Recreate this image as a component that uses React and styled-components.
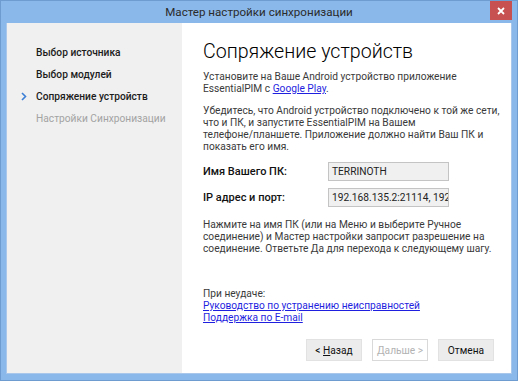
import React from "react";
import styled, { createGlobalStyle } from "styled-components";

const GlobalStyle = createGlobalStyle`
  html, body {
    margin: 0;
    padding: 0;
    background: #8ab8ea;
  }
  * {
    box-sizing: border-box;
  }
`;

const FONT = `Roboto, "Noto Sans", "DejaVu Sans", sans-serif`;

const Window = styled.div`
  position: relative;
  width: 518px;
  height: 381px;
  border: 1px solid #6e9bd0;
  background: #8ab8ea;
  display: flex;
  flex-direction: column;
  font-family: ${FONT};
`;

const TitleBar = styled.div`
  height: 22px;
  display: flex;
  align-items: center;
  justify-content: center;
  font-size: 11.6px;
  color: #2b2b2b;
`;

const CloseButton = styled.div`
  position: absolute;
  top: 0;
  right: 5px;
  width: 22px;
  height: 19px;
  background: #c75050;
  display: flex;
  align-items: center;
  justify-content: center;
`;

const Panel = styled.div`
  flex: 1;
  min-height: 0;
  margin: 0 5px 6px 5px;
  display: grid;
  grid-template-columns: 175px minmax(0, 1fr);
  background: #ffffff;
  border: 1px solid #a9c7ea;
  border-top: none;
`;

const Sidebar = styled.div`
  background: #f0f0f0;
  padding: 18px 0 0 0;
  display: flex;
  flex-direction: column;
`;

const Step = styled.div`
  position: relative;
  height: 22px;
  display: flex;
  align-items: center;
  padding-left: 29px;
  font-size: 10.2px;
  white-space: nowrap;
  font-weight: ${(p) => (p.$disabled ? 400 : 500)};
  color: ${(p) => (p.$disabled ? "#a3a3a3" : "#1c1c1c")};
`;

const Chevron = styled.svg`
  position: absolute;
  left: 14px;
  top: 7px;
`;

const Content = styled.div`
  min-width: 0;
  padding: 14px 17px 12px 21px;
  display: flex;
  flex-direction: column;
  color: #3a3a3a;
  font-size: 10.2px;
  line-height: 12px;
`;

const Heading = styled.h1`
  margin: 0 0 4px 0;
  font-size: 19.6px;
  line-height: 30px;
  font-weight: 300;
  color: #000;
`;

const Para = styled.p`
  margin: 0 0 ${(p) => p.$gap || 0}px 0;
  white-space: nowrap;
`;

const Link = styled.a`
  color: #1f1fe0;
  text-decoration: underline;
  cursor: pointer;
`;

const FieldRow = styled.div`
  display: flex;
  align-items: center;
  margin-bottom: ${(p) => p.$gap || 0}px;
`;

const Label = styled.div`
  width: 125px;
  color: #111;
  font-size: 11px;
  font-weight: 500;
`;

const Field = styled.div`
  width: 121px;
  height: 19px;
  border: 1px solid #c4c4c4;
  background: #f0f0f0;
  padding: 0 3px;
  display: flex;
  align-items: center;
  white-space: nowrap;
  overflow: hidden;
  color: #222;
`;

const Help = styled.div`
  margin-top: 33px;
  display: flex;
  flex-direction: column;
  align-items: flex-start;
`;

const Spacer = styled.div`
  flex: 1;
`;

const Footer = styled.div`
  display: flex;
  justify-content: flex-end;
  gap: 10px;
`;

const Button = styled.button`
  width: 56px;
  height: 22px;
  font-family: ${FONT};
  font-size: 10.2px;
  padding: 0;
  border: 1px solid ${(p) => (p.disabled ? "#d9d9d9" : "#e2e2e2")};
  background: ${(p) => (p.disabled ? "#ffffff" : "#ececec")};
  color: ${(p) => (p.disabled ? "#b2b2b2" : "#111")};
  u {
    text-decoration: underline;
  }
`;

const steps = [
  { label: "Выбор источника" },
  { label: "Выбор модулей" },
  { label: "Сопряжение устройств", current: true },
  { label: "Настройки Синхронизации", disabled: true },
];

export default function App() {
  return (
    <>
      <GlobalStyle />
      <Window>
        <TitleBar>Мастер настройки синхронизации</TitleBar>
        <CloseButton>
          <svg width="8" height="8" viewBox="0 0 8 8">
            <path d="M1 1 L7 7 M7 1 L1 7" stroke="#fff" strokeWidth="1.8" />
          </svg>
        </CloseButton>
        <Panel>
          <Sidebar>
            {steps.map((s) => (
              <Step key={s.label} $disabled={s.disabled}>
                {s.current && (
                  <Chevron width="6" height="9" viewBox="0 0 6 9">
                    <polyline points="1,1 4.5,4.5 1,8" fill="none" stroke="#3b7fd6" strokeWidth="1.6" />
                  </Chevron>
                )}
                {s.label}
              </Step>
            ))}
          </Sidebar>
          <Content>
            <Heading>Сопряжение устройств</Heading>
            <Para $gap={10}>
              Установите на Ваше Android устройство приложение
              <br />
              EssentialPIM с <Link>Google Play</Link>.
            </Para>
            <Para $gap={9}>
              Убедитесь, что Android устройство подключено к той же сети,
              <br />
              что и ПК, и запустите EssentialPIM на Вашем
              <br />
              телефоне/планшете. Приложение должно найти Ваш ПК и
              <br />
              показать его имя.
            </Para>
            <FieldRow $gap={7}>
              <Label>Имя Вашего ПК:</Label>
              <Field>TERRINOTH</Field>
            </FieldRow>
            <FieldRow $gap={12}>
              <Label>IP адрес и порт:</Label>
              <Field>192.168.135.2:21114, 192.168.1.5:21114</Field>
            </FieldRow>
            <Para>
              Нажмите на имя ПК (или на Меню и выберите Ручное
              <br />
              соединение) и Мастер настройки запросит разрешение на
              <br />
              соединение. Ответьте Да для перехода к следующему шагу.
            </Para>
            <Help>
              <span>При неудаче:</span>
              <Link>Руководство по устранению неисправностей</Link>
              <Link>Поддержка по E-mail</Link>
            </Help>
            <Spacer />
            <Footer>
              <Button>
                &lt; <u>Н</u>азад
              </Button>
              <Button disabled>Дальше &gt;</Button>
              <Button>Отмена</Button>
            </Footer>
          </Content>
        </Panel>
      </Window>
    </>
  );
}
